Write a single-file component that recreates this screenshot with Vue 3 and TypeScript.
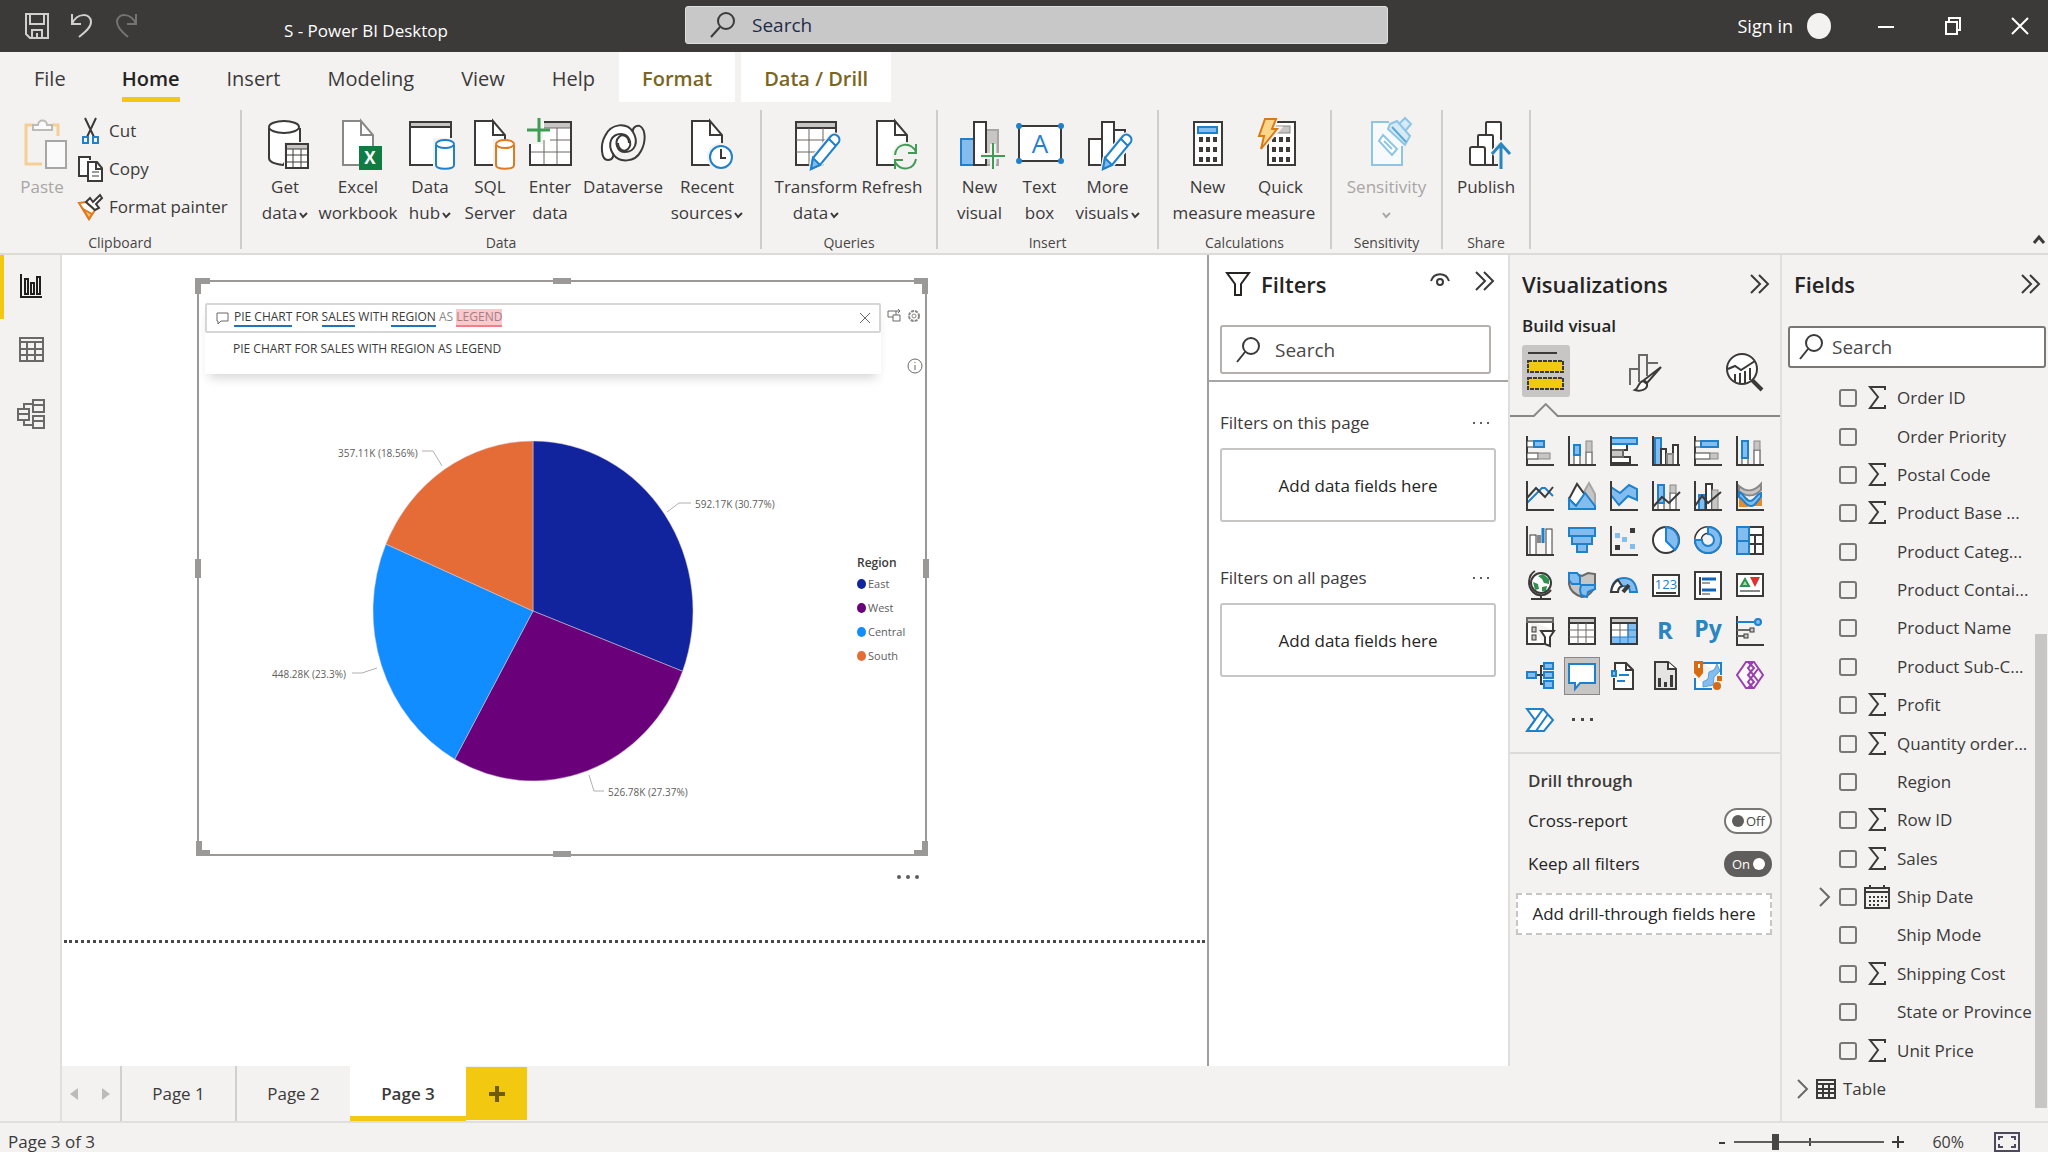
<script setup lang="ts">
import { ref } from 'vue'

const K = '#3b3a39'
const B = '#1f80cc'
const L = '#83bdf0'
const G = '#c8c6c4'

const box = (x: number, y: number, w: number, h: number, fill = '#fff', stroke = K) =>
  `<rect x="${x}" y="${y}" width="${w}" height="${h}" fill="${fill}" stroke="${stroke}"/>`
const line = (d: string, stroke = K, fill = 'none', width = 2) =>
  `<path d="${d}" fill="${fill}" stroke="${stroke}" stroke-width="${width}"/>`
const doc = (stroke = K) =>
  line('M27 3H9V47H39V17L27 3V17H39', stroke, '#fff')
const cylinder = (stroke: string) =>
  line('M30 27V47C30 52 48 52 48 47V27', stroke, '#fff') +
  `<ellipse cx="39" cy="26" rx="9" ry="4" fill="#fff" stroke="${stroke}" stroke-width="2"/>`
const pencil =
  '<path d="M39 18L21 40L19 51L28 47L47 25C49 20 43 14 39 18Z" fill="#fff" stroke="#f3f2f1" stroke-width="5"/>' +
  line('M39 18L21 40L19 51L28 47L47 24C49 19 43 14 39 18ZM37 21L44 28', B, '#fff') +
  line('M21 40L19 51L28 47Z', B, L)
const keypad = [15, 22, 29].map(x => [19, 29, 39].map(y => `<rect x="${x}" y="${y}" width="4" height="5" fill="${K}"/>`).join('')).join('')
const axes = line('M1 0V29H28')

const ribbonIcons: Record<string, string> = {
  paste: line('M12 7H4V46H20M30 7H36V18', '#f5cf96', 'none', 3) +
    line('M11 12V7H16C16 1 25 1 25 7H30V12Z', '#bdbbb9', '#fafafa') + line('M24 23H44V50H24Z', '#a8a6a4', '#fafafa'),
  getdata: line('M8 10V40C8 44 13 46 22 47L39 24V10', K, '#fff') + '<path d="M23 24H41V52H23Z" fill="#f3f2f1"/>' +
    line('M39 10V24') + `<ellipse cx="23" cy="9" rx="15" ry="6" fill="#fff" stroke="${K}" stroke-width="2"/>` +
    box(25, 26, 22, 24) + box(25, 26, 22, 5, G) + line('M25 37H47M25 44H47M32 31V50M40 31V50', K, 'none', 1) + line('M25 26H47V50H25Z'),
  excel: doc('#8a8886') + '<rect x="25" y="28" width="23" height="24" fill="#107c41"/><text x="36" y="46" fill="#fff" font-size="17" font-weight="700" text-anchor="middle">X</text>',
  hub: line('M4 4H45V47H4Z', K, '#fff') + line('M4 4H45V9H4Z', K, G) + '<path d="M27 20H51V52H27Z" fill="#f3f2f1"/>' + cylinder(B),
  sql: doc() + '<path d="M27 21H51V52H27Z" fill="#f3f2f1"/>' + cylinder('#e07a1c'),
  enter: line('M4 20V47H45V4H18', K, '#fff') + '<path d="M18 4H45V10H18Z" fill="#c8c6c4"/>' +
    line('M18 10H45M4 34H45M24 22H45M18 22V47M31 10V47', '#6b6967', 'none', 1) + line('M4 20V47H45V4H18') +
    '<path d="M0 0H17V26H3V16H0Z" fill="#f3f2f1"/>' + line('M13 0V24M1 12H24', '#3f9c55', 'none', 3),
  dataverse: line('M9 42C2 42 1 27 6 18C12 5 28 4 34 14C40 24 36 34 26 34C18 34 15 24 20 19C24 15 30 19 30 25', K, '#fff') +
    line('M41 8C47 12 47 24 42 33C36 45 20 45 14 36C8 26 12 16 22 16C30 16 34 26 29 31C25 35 19 31 19 25') +
    line('M9 42C14 42 15 37 14 35M41 8C36 7 33 11 34 14'),
  recent: doc() + '<circle cx="38" cy="39" r="14" fill="#f3f2f1"/><circle cx="38" cy="39" r="11" fill="#fff" stroke="#1f80cc" stroke-width="2"/>' + line('M38 31V40H43'),
  transform: line('M4 4H44V47H4Z', K, '#fff') + line('M4 4H44V10H4Z', K, G) +
    line('M4 22H44M4 34H44M17 10V47M31 10V47', '#6b6967', 'none', 1) + '<path d="M30 49L46 26V49H30Z" fill="#f3f2f1"/>' + pencil,
  refresh: doc() + '<circle cx="38" cy="38" r="14" fill="#f3f2f1"/>' +
    line('M27 37C28 25 43 23 48 34M48 26V35H40M48 41C46 52 33 54 27 44M27 51V42H35', '#3f9c55'),
  visual: line('M5 21H18V47H5Z', B, L) + line('M30 12H42V47H30Z', '#a8a6a4', G) + line('M18 4H30V47H18Z', K, '#fff') +
    line('M37 26V51M25 38H49', '#f3f2f1', 'none', 6) + line('M37 25V51M25 38H49', '#3f9c55', 'none', 2),
  textbox: line('M3 8H45V43H3Z', K, '#fff') + [[3, 8], [45, 8], [3, 43], [45, 43]].map(p => `<circle cx="${p[0]}" cy="${p[1]}" r="3" fill="${B}"/>`).join('') +
    `<text x="24" y="35" fill="${B}" font-size="26" text-anchor="middle">A</text>`,
  more: line('M5 21H18V47H5ZM30 12H41V47H30Z', K, '#fff') + line('M18 4H30V47H18Z', K, '#fff') + pencil,
  measure: line('M10 4H38V47H10Z', K, '#fff') + line('M14 9H33V15H14Z', B, L) + keypad,
  quick: line('M11 4H38V47H11Z', K, '#fff') + box(16, 8, 17, 7, G, '#8a8886') + keypad +
    line('M8 0H19L15 11H21L4 31L7 18H2Z', '#f3f2f1', '#f3f2f1', 5) + line('M8 1H19L15 11H20L4 31L7 18H2Z', '#d87a18', '#fcd688', 2),
  sensitivity: line('M26 4H9V47H39V28', '#8fc5e4', '#f6fafc') + line('M27 6L34 3L47 18L42 27L25 11ZM37 5L42 0L48 6L43 12', '#8fc5e4', '#d6ebf7') +
    line('M20 17L34 31L29 37L16 23ZM21 23L29 31', '#8fc5e4', '#fff') + line('M29 9L43 24', '#5ba9d6'),
  publish: line('M24 30V5Q24 4 25 4H38Q39 4 39 5V24', K, '#fff') + line('M16 40V18Q16 17 17 17H30Q31 17 31 18V47', K, '#fff') +
    line('M8 31Q8 29 10 29H21Q23 29 23 31V47H10Q8 47 8 45Z', K, '#fff') + line('M22 47H36') +
    line('M39 52V27M30 36L39 26L48 36', '#f3f2f1', 'none', 6) + line('M39 51V27M30 36L39 26L48 36', '#2a86bf', 'none', 3),
}

interface RibbonItem { icon: string; lines: string[]; w: number; menu?: boolean; off?: boolean }
const groups: { name: string; w: number; items: RibbonItem[] }[] = [
  { name: 'Data', w: 520, items: [
    { icon: 'getdata', lines: ['Get', 'data'], w: 72, menu: true },
    { icon: 'excel', lines: ['Excel', 'workbook'], w: 74 },
    { icon: 'hub', lines: ['Data', 'hub'], w: 70, menu: true },
    { icon: 'sql', lines: ['SQL', 'Server'], w: 50 },
    { icon: 'enter', lines: ['Enter', 'data'], w: 70 },
    { icon: 'dataverse', lines: ['Dataverse'], w: 76 },
    { icon: 'recent', lines: ['Recent', 'sources'], w: 92, menu: true },
  ] },
  { name: 'Queries', w: 176, items: [
    { icon: 'transform', lines: ['Transform', 'data'], w: 86, menu: true },
    { icon: 'refresh', lines: ['Refresh'], w: 66 },
  ] },
  { name: 'Insert', w: 221, items: [
    { icon: 'visual', lines: ['New', 'visual'], w: 62 },
    { icon: 'textbox', lines: ['Text', 'box'], w: 58 },
    { icon: 'more', lines: ['More', 'visuals'], w: 78, menu: true },
  ] },
  { name: 'Calculations', w: 173, items: [
    { icon: 'measure', lines: ['New', 'measure'], w: 72 },
    { icon: 'quick', lines: ['Quick', 'measure'], w: 74 },
  ] },
  { name: 'Sensitivity', w: 111, items: [{ icon: 'sensitivity', lines: ['Sensitivity', ''], w: 88, menu: true, off: true }] },
  { name: 'Share', w: 88, items: [{ icon: 'publish', lines: ['Publish'], w: 68 }] },
]

const tabs = ['File', 'Home', 'Insert', 'Modeling', 'View', 'Help']
const contextTabs = ['Format', 'Data / Drill']

const vizIcons: { name: string; art: string }[] = [
  { name: 'Stacked bar chart', art: axes + box(1, 5, 7, 6) + line('M8 5H18V11H8Z', B, L) + box(1, 17, 11, 6) + box(12, 17, 12, 6, G, '#8a8886') },
  { name: 'Stacked column chart', art: box(6, 19, 6, 10) + line('M6 9H12V19H6Z', B, L) + box(18, 16, 6, 13) + box(18, 5, 6, 11, G, '#8a8886') + axes },
  { name: 'Clustered bar chart', art: line('M1 8H17V14H1ZM1 21H20V27H1Z', K, '#fff') + line('M1 14H13V21H1Z', '#6b6967', G) + line('M1 2H27V8H1Z', B, L) + axes },
  { name: 'Clustered column chart', art: line('M3 2H9V29H3Z', B, L) + line('M9 13H14V29H9ZM21 9H26V29H21Z', K, '#fff') + line('M15 18H21V29H15Z', '#8a8886', G) + axes },
  { name: '100% stacked bar chart', art: axes + box(1, 5, 6, 6) + line('M7 5H24V11H7Z', B, L) + box(1, 17, 15, 6) + box(16, 17, 8, 6, G, '#8a8886') },
  { name: '100% stacked column chart', art: box(6, 22, 6, 7) + line('M6 5H12V22H6Z', B, L) + box(18, 14, 6, 15) + box(18, 5, 6, 9, G, '#8a8886') + axes },
  { name: 'Line chart', art: line('M1 22L16 7H19L27 15', B) + line('M1 17L10 7L19 16L27 6') + axes },
  { name: 'Area chart', art: line('M13 16L21 2L27 13V28H20Z', '#a8a6a4', G) + line('M1 18L9 3L17 14L8 25Z', K, '#fff') + line('M1 18L8 25L17 12L27 25V28H1Z', B, L) },
  { name: 'Stacked area chart', art: line('M1 6L10 12L19 4L27 8V19L18 15L9 24L1 14Z', B, L) + axes },
  { name: 'Line and stacked column chart', art: box(6, 22, 6, 7) + line('M6 4H12V22H6Z', B, L) + box(18, 12, 6, 17) + box(18, 4, 6, 8, G, '#8a8886') + line('M1 26L10 16L17 22L28 11') + axes },
  { name: 'Line and clustered column chart', art: line('M5 14H11V29H5Z', B, L) + line('M12 3H18V29H12Z', K, '#fff') + box(18, 9, 6, 20, G, '#8a8886') + line('M1 25L8 15L14 22L27 11') + axes },
  { name: 'Ribbon chart', art: '<path d="M3 17H12V26H3ZM17 17H26V25H17Z" fill="#e8892c"/>' + line('M3 5C10 11 18 11 25 3V9C18 16 10 16 3 10Z', '#8a8886', G) + line('M3 11C9 13 9 20 14 20C19 20 20 13 25 12V16C22 18 20 25 15 25C9 25 8 18 3 16Z', B, L) + axes },
  { name: 'Waterfall chart', art: box(4, 9, 6, 20) + box(20, 3, 6, 26) + line('M13 9V17', '#8a8886', 'none', 4) + line('M17 2V17', B, 'none', 3) + axes },
  { name: 'Funnel', art: line('M1 2H27V10H1Z', B, L) + line('M4 10H24V18H4Z', B, L) + line('M9 18H19V26H9Z', B, L) },
  { name: 'Scatter chart', art: axes + '<path d="M20 2H25V7H20ZM5 19H10V24H5Z" fill="#3b3a39"/><path d="M5 7H10V12H5ZM12 11H17V16H12ZM20 18H25V23H20Z" fill="#83bdf0"/>' },
  { name: 'Pie chart', art: '<circle cx="14" cy="14" r="13" fill="#fff" stroke="#3b3a39" stroke-width="2"/>' + line('M14 1V15L23 24C30 16 27 3 14 1Z', B, L) },
  { name: 'Donut chart', art: '<circle cx="14" cy="14" r="10" fill="none" stroke="#3b3a39" stroke-width="8"/><circle cx="14" cy="14" r="10" fill="none" stroke="#fff" stroke-width="5"/>' + line('M14 1A13 13 0 1 1 1 14H8A6 6 0 1 0 14 8Z', B, L) },
  { name: 'Treemap', art: line('M1 1H27V28H1ZM13 9H27M19 9V28M13 18H27', K, '#fff') + line('M1 1H13V28H1ZM1 15H13', B, L) },
  { name: 'Map', art: '<circle cx="15" cy="12" r="10" fill="#fff" stroke="#3b3a39" stroke-width="2"/>' + '<path d="M12 5L17 3L23 8V13L18 12L16 8ZM7 11L12 13L13 18L9 19ZM16 16L21 15L20 20L16 20Z" fill="#2f9150"/>' + line('M9 0C2 4 1 15 7 21C12 26 20 25 25 19M15 24V28M5 28H25') },
  { name: 'Filled map', art: line('M1 2L8 3L14 5L20 2L27 3V13C27 19 20 26 14 26C8 24 2 20 1 13Z', '#6b6967', G) + line('M1 2H9L12 6V13H4L1 9Z', B, L) + line('M13 14H27V18L20 21L19 26L13 24L12 19Z', B, L) },
  { name: 'Gauge', art: line('M1 21C2 12 6 7 14 7C22 7 26 12 27 21H20C20 17 18 15 14 15C10 15 8 17 8 21Z', B, L) + line('M1 21C2 15 4 11 8 9L12 15C9 16 8 18 8 21Z', K, '#fff') + line('M13 21L19 14', K, 'none', 4) },
  { name: 'Card', art: line('M1 4H27V25H1ZM4 22H24', K, '#fff') + '<text x="14" y="18" font-size="13" text-anchor="middle" fill="#1f80cc">123</text>' },
  { name: 'Multi-row card', art: line('M1 1H27V28H1ZM6 6V24', K, '#fff') + line('M8 8H22M8 19H22', '#0f66b8', 'none', 3) + line('M8 12H16M8 23H16', K, 'none', 1) },
  { name: 'KPI', art: line('M1 3H27V25H1Z', K, '#fff') + line('M4 20H24', '#8a8886') + line('M5 15L9 8L13 15Z', '#2f9150', '#a4dcae') + '<path d="M14 6H24L19 16Z" fill="#e03030"/>' },
  { name: 'Slicer', art: line('M1 3H27V14M18 28H1V3', K, '#fff') + line('M1 2H27V6H1Z', '#6b6967', G) + box(6, 11, 4, 5, G) + box(6, 19, 4, 5, G) + line('M15 15H28L24 21V30L19 28V21Z', K, '#fff') },
  { name: 'Table', art: line('M1 2H27V28H1Z', K, '#fff') + line('M1 2H27V7H1Z', K, G) + line('M1 14H27M1 21H27M10 7V28M18 7V28', '#6b6967', 'none', 1) },
  { name: 'Matrix', art: line('M1 2H27V28H1Z', K, '#fff') + '<path d="M18 7H27V28H1V21H18Z" fill="#83bdf0"/>' + line('M1 14H18M10 7V21M18 7V21', '#6b6967', 'none', 1) + line('M18 14H27M1 21H27M10 21V28M18 7V28', B, 'none', 1) + line('M1 2H27V28H1Z') + line('M1 2H27V7H1Z', K, G) },
  { name: 'R script visual', art: '<text x="13" y="23" font-size="24" font-weight="700" text-anchor="middle" fill="#2a86bf">R</text>' },
  { name: 'Python visual', art: '<text x="14" y="21" font-size="23" font-weight="700" text-anchor="middle" fill="#2a86bf">Py</text>' },
  { name: 'Key influencers', art: axes + line('M1 6H18', B) + line('M1 14H14M1 20H8', '#6b6967') + '<circle cx="22" cy="6" r="3" fill="#83bdf0" stroke="#1f80cc" stroke-width="2"/>' + box(14, 12, 4, 4, G) + box(8, 18, 4, 4, G) },
  { name: 'Decomposition tree', art: line('M10 14H18M19 5H15V23H19') + line('M1 11H10V17H1ZM18 2H27V8H18ZM18 11H27V17H18ZM18 20H27V27H18Z', B, L) },
  { name: 'Q&A', art: line('M1 3H27V22H12L7 28V22H1Z', B, '#fff') },
  { name: 'Smart narrative', art: line('M5 10V2H16L23 9V28H4V17M16 2V9H23', K, '#fff') + line('M2 10H6V15H2Z', B, L) + line('M9 14H19M7 20H15', B) },
  { name: 'Paginated report', art: line('M3 1H16L24 8V28H3Z', K, '#e6e4e2') + line('M16 1V8H24', K, '#fff') + '<path d="M6 17H9V26H6ZM12 21H15V26H12ZM18 14H21V26H18Z" fill="#3b3a39"/>' },
  { name: 'ArcGIS Maps', art: line('M9 2H27V14M18 28H1V17', B, '#fff') + line('M23 3L20 9L15 11L14 18L9 21V26L19 24L20 16L26 10Z', '#5aa0dc', L, 1) + '<path d="M0 0H9V12L5 17L0 12ZM23 15H28V20H23Z" fill="#d86b12"/><circle cx="23" cy="25" r="4" fill="#d86b12"/><path d="M4 3H6V7H4Z" fill="#fff"/>' },
  { name: 'Power Apps', art: line('M10 1H18L27 14L18 27H10L1 14Z', '#9a3fae', '#fdf8fd') + line('M12 1L18 7L12 14L18 21L12 27M17 1L12 7L22 20M17 27L12 21L22 8', '#9a3fae') },
  { name: 'Power Automate', art: line('M1 3H17L27 14L18 25H1L9 14Z', B, '#fff') + line('M17 3L1 25M22 8L10 25M9 14L13 9', B) },
  { name: 'More visuals', art: '<path d="M4 12H7V15H4ZM13 12H16V15H13ZM22 12H25V15H22Z" fill="#4a4948"/>' },
]

const slices = [
  { name: 'East', share: 30.77, color: '#12239e' },
  { name: 'West', share: 27.37, color: '#6b007b' },
  { name: 'Central', share: 23.3, color: '#118dff' },
  { name: 'South', share: 18.56, color: '#e66c37' },
]
const rx = 160
const ry = 170
let turned = 0
const wedges = slices.map(s => {
  const point = (pct: number) => {
    const a = (pct / 100) * Math.PI * 2
    return `${(335 + rx * Math.sin(a)).toFixed(1)} ${(232 - ry * Math.cos(a)).toFixed(1)}`
  }
  const start = point(turned)
  turned += s.share
  return { color: s.color, d: `M335 232L${start}A${rx} ${ry} 0 0 1 ${point(turned)}Z` }
})
const callouts = [
  { text: '592.17K (30.77%)', x: 497, y: 129, d: 'M469 133L481 124H493' },
  { text: '526.78K (27.37%)', x: 410, y: 417, d: 'M391 396L396 412H406' },
  { text: '448.28K (23.3%)', x: 74, y: 299, d: 'M179 289L164 294H154' },
  { text: '357.11K (18.56%)', x: 140, y: 78, d: 'M244 87L235 72H224' },
]

const fields = [
  { name: 'Order ID', kind: 'sum' }, { name: 'Order Priority', kind: '' }, { name: 'Postal Code', kind: 'sum' },
  { name: 'Product Base ...', kind: 'sum' }, { name: 'Product Categ...', kind: '' }, { name: 'Product Contai...', kind: '' },
  { name: 'Product Name', kind: '' }, { name: 'Product Sub-C...', kind: '' }, { name: 'Profit', kind: 'sum' },
  { name: 'Quantity order...', kind: 'sum' }, { name: 'Region', kind: '' }, { name: 'Row ID', kind: 'sum' },
  { name: 'Sales', kind: 'sum' }, { name: 'Ship Date', kind: 'date' }, { name: 'Ship Mode', kind: '' },
  { name: 'Shipping Cost', kind: 'sum' }, { name: 'State or Province', kind: '' }, { name: 'Unit Price', kind: 'sum' },
]

const pages = ['Page 1', 'Page 2', 'Page 3']
const page = ref(2)
const zoom = ref(60)
const crossReport = ref(false)
const keepFilters = ref(true)
</script>

<template>
  <div class="app">
    <header class="titlebar">
      <div class="quick">
        <button aria-label="Save"><svg width="24" height="26" viewBox="0 0 24 26" fill="none" stroke="#d0d0d0" stroke-width="2"><path d="M1 1H23V25H5L1 21ZM5 1V11H19V1M7 25V17H17V25M12 20V25" /></svg></button>
        <button aria-label="Undo"><svg width="24" height="26" viewBox="0 0 24 26" fill="none" stroke="#d0d0d0" stroke-width="2"><path d="M2 1V11H11M2 11C7 -1 21 0 21 9C21 15 14 20 9 24" /></svg></button>
        <button aria-label="Redo"><svg width="24" height="26" viewBox="0 0 24 26" fill="none" stroke="#747474" stroke-width="2"><path d="M21 1V11H12M21 11C16 -1 2 0 2 9C2 15 8 20 13 24" /></svg></button>
      </div>
      <h1>S - Power BI Desktop</h1>
      <label class="topsearch">
        <svg width="26" height="26" viewBox="0 0 26 26" fill="none" stroke="#3b3a39" stroke-width="2"><circle cx="16" cy="9" r="8" /><path d="M10 15L1 25" /></svg>
        <input type="search" placeholder="Search" aria-label="Search">
      </label>
      <div class="account">
        <a href="#">Sign in</a><span class="avatar"></span>
        <button aria-label="Minimize"><svg width="18" height="18" viewBox="0 0 18 18" fill="none" stroke="#fff" stroke-width="2"><path d="M1 10H17" /></svg></button>
        <button aria-label="Restore"><svg width="18" height="18" viewBox="0 0 18 18" fill="none" stroke="#fff" stroke-width="2"><path d="M2 5H13V17H2ZM5 5V1H16V13H13" /></svg></button>
        <button aria-label="Close"><svg width="18" height="18" viewBox="0 0 18 18" fill="none" stroke="#fff" stroke-width="2"><path d="M1 1L17 17M17 1L1 17" /></svg></button>
      </div>
    </header>

    <nav class="tabs">
      <button v-for="t in tabs" :key="t" :class="{ current: t === 'Home', file: t === 'File' }">{{ t }}</button>
      <div class="context"><button v-for="t in contextTabs" :key="t">{{ t }}</button></div>
    </nav>

    <section class="ribbon">
      <div class="group clipboard">
        <div class="items">
          <button class="big off paste" disabled><svg width="48" height="52" viewBox="-4 0 48 52" v-html="ribbonIcons.paste"></svg><span>Paste</span></button>
          <div class="small">
            <button><svg width="26" height="26" viewBox="0 0 26 26" fill="none" stroke="#3b3a39" stroke-width="2"><path d="M7 0L16 19M18 0L9 19" /><path d="M5 19H10V25H5ZM15 19H20V25H15Z" stroke="#1f80cc" /></svg>Cut</button>
            <button><svg width="26" height="26" viewBox="0 0 26 26" fill="#fff" stroke="#3b3a39" stroke-width="2"><path d="M10 20H1V1H12V4" /><path d="M10 6H19L24 12V25H10ZM18 6V13H24" /><path d="M14 16H21M14 20H21" stroke-width="1" /></svg>Copy</button>
            <button><svg width="26" height="26" viewBox="0 0 26 26" fill="#fff" stroke="#3b3a39" stroke-width="2"><path d="M1 9L8 8L17 16L11 25Z" stroke="#e07a1c" /><path d="M5 15L14 20L11 25Z" fill="#f6c184" stroke="#e07a1c" /><path d="M8 8L12 4L15 8L22 1L24 4L18 10L21 14L17 16Z" /></svg>Format painter</button>
          </div>
        </div>
        <p>Clipboard</p>
      </div>
      <div v-for="g in groups" :key="g.name" class="group" :style="{ width: g.w + 'px' }">
        <div class="items">
          <button v-for="i in g.items" :key="i.icon" class="big" :class="{ off: i.off }" :disabled="i.off" :style="{ width: i.w + 'px' }">
            <svg width="48" height="52" viewBox="0 0 48 52" v-html="ribbonIcons[i.icon]"></svg>
            <span>{{ i.lines[0] }}</span>
            <span v-if="i.lines.length > 1">{{ i.lines[1] }}<svg v-if="i.menu" class="caret" width="9" height="8" viewBox="0 0 9 8" fill="none" stroke="currentColor" stroke-width="2"><path d="M1 2L4 6L8 2" /></svg></span>
          </button>
        </div>
        <p>{{ g.name }}</p>
      </div>
      <button class="collapse" aria-label="Collapse ribbon"><svg width="14" height="10" viewBox="0 0 14 10" fill="none" stroke="#3b3a39" stroke-width="3"><path d="M2 8L7 2L12 8" /></svg></button>
    </section>

    <div class="body">
      <aside class="rail">
        <button class="on" aria-label="Report view"><svg width="28" height="30" viewBox="0 0 28 30" fill="none" stroke="#201f1e" stroke-width="2"><path d="M4 3V26H25M8 8H11V23H8ZM14 12H17V23H14ZM20 6H23V23H20Z" /></svg></button>
        <button aria-label="Data view"><svg width="28" height="30" viewBox="0 0 28 30" fill="none" stroke="#6b6967" stroke-width="2"><path d="M3 3H26V26H3ZM3 7H26M3 14H26M3 20H26M10 7V26M18 7V26" /></svg></button>
        <button aria-label="Model view"><svg width="28" height="30" viewBox="0 0 28 30" fill="none" stroke="#6b6967" stroke-width="2"><path d="M1 10H12V21H1ZM1 15H12M16 1H27V13H16ZM16 6H27M16 17H27V29H16ZM16 22H27M7 10V5H16M7 21V26H16" /></svg></button>
      </aside>

      <div class="center">
        <div class="work">
          <main class="canvas">
            <article class="visual">
              <svg class="frame" width="736" height="582" viewBox="0 0 736 582" fill="none" stroke="#9b9998">
                <path d="M4 5H732V579H4Z" stroke-width="2" />
                <path d="M4 18V5H16M720 5H731V18M731 565V577H720M16 577H5V565M359 5H377M359 578H377M4 283V302M732 283V302" stroke-width="6" />
              </svg>
              <div class="qna">
                <div class="ask">
                  <div class="field">
                    <svg width="13" height="14" viewBox="0 0 13 14" fill="none" stroke="#6b6967"><path d="M1 2H12V10H5L2 13V10H1Z" /></svg>
                    <div class="query" role="textbox" contenteditable="true" aria-label="Ask a question"><u>PIE CHART</u> FOR <u>SALES</u> WITH <u>REGION</u> <i>AS</i> <mark>LEGEND</mark></div>
                    <button aria-label="Clear"><svg width="12" height="12" viewBox="0 0 12 12" stroke="#6b6967"><path d="M1 1L11 11M11 1L1 11" /></svg></button>
                  </div>
                  <button class="suggestion">PIE CHART FOR SALES WITH REGION AS LEGEND</button>
                </div>
                <div class="tools">
                  <button aria-label="Convert to standard visual"><svg width="14" height="14" viewBox="0 0 14 14" fill="none" stroke="#6b6967"><path d="M6 8H1V2H9M6 6H13V12H6ZM9 6V2H12M11 0L13 2L11 4" /></svg></button>
                  <button aria-label="Settings"><svg width="14" height="14" viewBox="0 0 14 14" fill="none" stroke="#8a8886"><circle cx="7" cy="7" r="5" stroke-width="2" stroke-dasharray="3 1" /><circle cx="7" cy="7" r="2" /></svg></button>
                  <button class="info" aria-label="Information"><svg width="16" height="16" viewBox="0 0 16 16" fill="none" stroke="#6b6967"><circle cx="8" cy="8" r="7" /><path d="M8 7V12M8 4V5" /></svg></button>
                </div>
              </div>
              <div class="chart">
                <svg class="pie" width="640" height="450" viewBox="0 0 640 450" role="img" aria-label="Sales by region">
                  <path v-for="w in wedges" :key="w.d" :d="w.d" :fill="w.color" stroke="#d8d0dc" stroke-width="0.5" />
                  <g v-for="c in callouts" :key="c.text">
                    <path :d="c.d" fill="none" stroke="#b3b0ad" />
                    <text :x="c.x" :y="c.y" font-size="10" fill="#605e5c">{{ c.text }}</text>
                  </g>
                </svg>
                <div class="legend">
                  <strong>Region</strong>
                  <ul><li v-for="s in slices" :key="s.name"><span :style="{ background: s.color }"></span>{{ s.name }}</li></ul>
                </div>
              </div>
              <button class="options" aria-label="More options"><svg width="24" height="6" viewBox="0 0 24 6" fill="#605e5c"><circle cx="3" cy="3" r="2" /><circle cx="12" cy="3" r="2" /><circle cx="21" cy="3" r="2" /></svg></button>
            </article>
            <hr>
          </main>

          <aside class="filters">
            <div class="head">
              <svg width="26" height="26" viewBox="0 0 26 26" fill="none" stroke="#252423" stroke-width="2"><path d="M2 2H24L16 13V24H10V13Z" /></svg>
              <h2>Filters</h2>
              <button aria-label="Show filters"><svg width="20" height="16" viewBox="0 0 20 16" fill="none" stroke="#3b3a39" stroke-width="2"><path d="M1 8C4 -1 16 -1 19 8" /><circle cx="10" cy="9" r="3" /></svg></button>
              <button aria-label="Collapse filters"><svg width="20" height="20" viewBox="0 0 20 20" fill="none" stroke="#3b3a39" stroke-width="2"><path d="M1 1L10 10L1 19M9 1L18 10L9 19" /></svg></button>
            </div>
            <label class="search">
              <svg width="24" height="26" viewBox="0 0 24 26" fill="none" stroke="#3b3a39" stroke-width="2"><circle cx="15" cy="9" r="8" /><path d="M9 15L1 25" /></svg>
              <input type="search" placeholder="Search" aria-label="Search filters">
            </label>
            <section v-for="f in ['Filters on this page', 'Filters on all pages']" :key="f">
              <h3>{{ f }}<button aria-label="More options"><svg width="18" height="4" viewBox="0 0 18 4" fill="#605e5c"><path d="M0 1H2V3H0ZM7 1H9V3H7ZM14 1H16V3H14Z" /></svg></button></h3>
              <div class="drop">Add data fields here</div>
            </section>
          </aside>
        </div>

        <footer class="pages">
          <button class="arrow" aria-label="Previous page"><svg width="8" height="12" viewBox="0 0 8 12" fill="#bdbbb9"><path d="M8 0V12L0 6Z" /></svg></button>
          <button class="arrow" aria-label="Next page"><svg width="8" height="12" viewBox="0 0 8 12" fill="#bdbbb9"><path d="M0 0V12L8 6Z" /></svg></button>
          <button v-for="(p, n) in pages" :key="p" class="page" :class="{ on: n === page }" @click="page = n">{{ p }}</button>
          <button class="add" aria-label="New page"><svg width="18" height="18" viewBox="0 0 18 18" stroke="#6e5c08" stroke-width="4"><path d="M9 1V17M1 9H17" /></svg></button>
        </footer>
      </div>

      <aside class="viz">
        <div class="head">
          <h2>Visualizations</h2>
          <button aria-label="Collapse visualizations"><svg width="20" height="20" viewBox="0 0 20 20" fill="none" stroke="#3b3a39" stroke-width="2"><path d="M1 1L10 10L1 19M9 1L18 10L9 19" /></svg></button>
        </div>
        <h3>Build visual</h3>
        <div class="modes">
          <button class="on" aria-label="Build visual"><svg width="38" height="40" viewBox="0 0 38 40"><path d="M1 2H30" stroke="#3b3a39" stroke-width="2" /><path d="M1 10H36V21H1ZM1 27H36V38H1Z" fill="#f2c811" stroke="#3b3a39" stroke-width="2" stroke-dasharray="4 1" /></svg></button>
          <button aria-label="Format visual"><svg width="38" height="40" viewBox="0 0 38 40" fill="none" stroke="#6b6967" stroke-width="2"><path d="M3 34V18H12V31M12 18V4H20V25M20 12H31" /><path d="M34 16L20 32L17 29Z" fill="#fff" stroke="#3b3a39" /><path d="M8 39C12 37 11 31 16 30L20 33C21 38 14 41 8 39Z" fill="#fff" stroke="#3b3a39" /></svg></button>
          <button aria-label="Add further analyses"><svg width="38" height="40" viewBox="0 0 38 40" fill="none" stroke="#3b3a39" stroke-width="2"><circle cx="16" cy="18" r="15" fill="#fff" /><path d="M2 18L9 15L15 19L29 10M9 23V31M14 22V33M19 20V32M24 17V29" /><path d="M26 29L36 39" stroke-width="4" /></svg></button>
        </div>
        <svg class="notch" height="14" width="272" viewBox="0 0 272 14" fill="none" stroke="#8a8886" stroke-width="2"><path d="M0 13H24L36 1L48 13H272" /></svg>
        <div class="gallery">
          <button v-for="v in vizIcons" :key="v.name" :class="{ on: v.name === 'Q&A' }" :aria-label="v.name"><svg width="28" height="30" viewBox="0 0 28 30" v-html="v.art"></svg></button>
        </div>
        <div class="drill">
          <h3>Drill through</h3>
          <label class="row">Cross-report<span class="switch"><input v-model="crossReport" type="checkbox"><span>{{ crossReport ? 'On' : 'Off' }}</span></span></label>
          <label class="row">Keep all filters<span class="switch"><input v-model="keepFilters" type="checkbox"><span>{{ keepFilters ? 'On' : 'Off' }}</span></span></label>
          <div class="well">Add drill-through fields here</div>
        </div>
      </aside>

      <aside class="fields">
        <div class="head">
          <h2>Fields</h2>
          <button aria-label="Collapse fields"><svg width="20" height="20" viewBox="0 0 20 20" fill="none" stroke="#3b3a39" stroke-width="2"><path d="M1 1L10 10L1 19M9 1L18 10L9 19" /></svg></button>
        </div>
        <label class="search">
          <svg width="24" height="26" viewBox="0 0 24 26" fill="none" stroke="#3b3a39" stroke-width="2"><circle cx="15" cy="9" r="8" /><path d="M9 15L1 25" /></svg>
          <input type="search" placeholder="Search" aria-label="Search fields">
        </label>
        <div class="listing">
          <ul>
            <li v-for="f in fields" :key="f.name">
              <svg class="twist" width="12" height="20" viewBox="0 0 12 20" fill="none" stroke="#6b6967" stroke-width="2"><path v-if="f.kind === 'date'" d="M1 1L10 10L1 19" /></svg>
              <label>
                <input type="checkbox">
                <svg width="26" height="26" viewBox="0 0 26 26" fill="none" stroke="#3b3a39" stroke-width="2">
                  <path v-if="f.kind === 'sum'" d="M21 5V2H6L14 12L6 23H21V20" />
                  <path v-if="f.kind === 'date'" d="M1 4H25V24H1ZM1 8H25M6 1V5M20 1V5" />
                  <path v-if="f.kind === 'date'" d="M5 13H23M5 17H23M5 21H17" stroke-dasharray="2 2" />
                </svg>
                {{ f.name }}
              </label>
            </li>
            <li class="table">
              <svg class="twist" width="12" height="20" viewBox="0 0 12 20" fill="none" stroke="#6b6967" stroke-width="2"><path d="M1 1L10 10L1 19" /></svg>
              <svg width="20" height="20" viewBox="0 0 20 20" fill="none" stroke="#3b3a39" stroke-width="2"><path d="M1 1H19V19H1ZM1 5H19M1 10H19M1 14H19M7 5V19M13 5V19" /></svg>
              Table
            </li>
          </ul>
          <div class="scroll"><span></span></div>
        </div>
      </aside>
    </div>

    <footer class="status">
      <span>Page {{ page + 1 }} of {{ pages.length }}</span>
      <div class="zoom">
        <button aria-label="Zoom out"><svg width="8" height="16" viewBox="0 0 8 16" stroke="#3b3a39" stroke-width="2"><path d="M1 9H7" /></svg></button>
        <span class="track"><input v-model.number="zoom" type="range" min="10" max="200" aria-label="Zoom level"></span>
        <button aria-label="Zoom in"><svg width="12" height="16" viewBox="0 0 12 16" stroke="#3b3a39" stroke-width="2"><path d="M0 8H12M6 2V14" /></svg></button>
        <output>{{ zoom }}%</output>
        <button aria-label="Fit to page"><svg width="26" height="20" viewBox="0 0 26 20" fill="none" stroke="#4c4a5c" stroke-width="2"><path d="M1 1H25V19H1ZM5 8V5H9M17 5H21V8M21 12V15H17M9 15H5V12" /></svg></button>
      </div>
    </footer>
  </div>
</template>

<style>
body { margin: 0; background: #fff; }
</style>

<style scoped>
.app { display: flex; flex-direction: column; height: 100vh; overflow: hidden; font: 17px/26px "Segoe UI", "Open Sans", "Noto Sans", sans-serif; color: #3b3a39; background: #f3f2f1; }
.app * { box-sizing: border-box; }
button { font: inherit; color: inherit; background: none; border: 0; padding: 0; margin: 0; }
svg { display: block; flex: none; overflow: visible; }
h1, h2, h3, p, ul { margin: 0; padding: 0; font-weight: 400; list-style: none; }
input[type="search"] { flex: 1; min-width: 0; border: 0; padding: 0; background: none; outline: 0; font: inherit; font-size: 19px; color: #252423; }
input[type="search"]::placeholder { color: #4a4948; opacity: 1; }

.titlebar { flex: none; display: flex; align-items: center; height: 52px; background: #3b3a39; color: #fff; }
.quick { display: flex; gap: 21px; width: 284px; padding-left: 25px; }
.titlebar h1 { flex: none; width: 401px; padding-top: 10px; font-size: 17px; }
.topsearch { display: flex; align-items: center; gap: 16px; width: 703px; height: 38px; margin-bottom: 2px; padding: 0 24px; border: 1px solid #dedede; border-radius: 3px; background: #c8c8c8; }
.topsearch input::placeholder { color: #1f2c4c; }
.account { display: flex; align-items: center; margin-left: auto; padding-right: 19px; }
.account a { color: #fff; text-decoration: none; font-size: 18px; }
.avatar { width: 24px; height: 26px; margin: 0 46px 0 14px; border-radius: 50%; background: #f3f2f1; }
.account button + button { margin-left: 49px; }

.tabs { flex: none; display: flex; height: 50px; padding-left: 34px; gap: 47px; font-size: 20px; color: #3b3a39; }
.tabs button { height: 50px; padding-top: 4px; white-space: nowrap; }
.tabs .file { padding-right: 9px; }
.tabs .current { font-weight: 600; color: #252423; box-shadow: inset 0 -5px #f2c811; }
.context { display: flex; gap: 6px; margin-left: -23px; }
.context button { padding: 4px 23px 0; background: #fff; color: #7a661e; font-weight: 600; }

.ribbon { flex: none; position: relative; display: flex; height: 153px; padding: 8px 0 4px; border-bottom: 2px solid #dddbd9; }
.group { display: flex; flex-direction: column; justify-content: space-between; border-right: 2px solid #cfcdcb; }
.group > p { font-size: 14px; line-height: 12px; text-align: center; color: #484644; }
.items { display: flex; justify-content: center; padding-top: 8px; }
.big { flex: none; display: flex; flex-direction: column; align-items: center; justify-content: flex-start; white-space: nowrap; }
.big svg { margin-bottom: 4px; }
.big span { display: flex; align-items: center; gap: 2px; height: 26px; font-size: 17px; line-height: 26px; }
.big .caret { margin: 4px 0 0; }
.off { color: #a8a6a4; }
.clipboard { width: 242px; }
.clipboard .items { justify-content: flex-start; padding-left: 8px; }
.paste { width: 68px; }
.small { display: flex; flex-direction: column; margin-top: -6px; }
.small button { display: flex; align-items: center; gap: 5px; height: 38px; margin-left: 2px; white-space: nowrap; }
.collapse { position: absolute; right: 2px; bottom: 8px; }

.body { flex: 1; display: flex; min-height: 0; }
.rail { flex: none; width: 62px; border-right: 2px solid #e1dfdd; }
.rail button { display: flex; align-items: center; justify-content: center; width: 60px; height: 64px; padding: 0 2px 2px 0; border-left: 4px solid transparent; }
.rail .on { border-color: #f2c811; }
.center { flex: 1; min-width: 0; display: flex; flex-direction: column; }
.work { flex: 1; display: flex; min-height: 0; background: #fff; }
.canvas { flex: 1; position: relative; min-width: 0; padding: 21px 0 0 132px; }
.canvas hr { margin: 57px 2px 0 -130px; border: 0; border-top: 3px dotted #4a4948; }
.visual { position: relative; width: 736px; height: 607px; }
.frame { position: absolute; inset: 0 auto auto 0; }
.qna { position: relative; z-index: 1; display: flex; gap: 6px; padding: 27px 5px 0 11px; font-size: 12px; line-height: 16px; }
.ask { width: 676px; box-shadow: 0 8px 10px -4px rgba(0, 0, 0, .16); background: #fff; }
.field { display: flex; align-items: center; height: 30px; padding: 0 8px 0 9px; border: 2px solid #d8d6d4; border-radius: 2px; background: #fff; }
.query { flex: 1; padding-left: 5px; outline: 0; white-space: nowrap; }
.query u { display: inline-block; text-decoration: none; border-bottom: 2px solid #1f73b8; }
.query i { font-style: normal; color: #8a8886; }
.query mark { display: inline-block; border-bottom: 2px solid #f08088; background: #fbc8cc; color: #a08084; }
.suggestion { display: block; width: 100%; height: 32px; padding-left: 28px; text-align: left; white-space: nowrap; }
.tools { display: flex; flex-wrap: wrap; align-content: flex-start; gap: 35px 6px; padding-top: 6px; width: 36px; }
.tools .info { margin-left: 20px; }
.chart { display: flex; margin-top: 5px; }
.pie { margin-left: 4px; font-family: inherit; }
.legend { margin: 175px 0 0 19px; font-size: 11px; line-height: 18px; color: #605e5c; }
.legend strong { display: block; color: #3b3a39; font-size: 12px; font-weight: 600; }
.legend li { display: flex; align-items: center; gap: 2px; height: 24px; }
.legend li span { width: 9px; height: 10px; border-radius: 50%; }
.options { position: absolute; right: 10px; bottom: 3px; }

.filters { flex: none; width: 303px; border-left: 2px solid #a19f9d; border-right: 2px solid #e1dfdd; }
.head { display: flex; align-items: center; height: 58px; }
.head h2 { font-size: 22px; font-weight: 600; line-height: 30px; color: #252423; }
.filters .head { padding: 0 13px 0 16px; }
.filters h2 { flex: 1; padding-left: 10px; }
.filters .head button { margin: 0 0 6px 25px; }
.search { display: flex; align-items: center; border: 2px solid #b3b0ad; border-radius: 3px; background: #fff; }
.filters .search { gap: 15px; width: 271px; height: 49px; margin: 12px 0 0 11px; padding: 0 14px; }
.filters .search + section { margin-top: 6px; border-top: 2px solid #a8a6a4; padding-top: 28px; }
.filters section { padding-top: 43px; }
.filters h3 { display: flex; justify-content: space-between; align-items: center; padding: 0 17px 0 11px; height: 26px; color: #3b3a39; font-size: 17px; }
.drop { height: 74px; margin: 12px 12px 0 11px; border: 2px solid #c8c6c4; border-radius: 3px; line-height: 72px; text-align: center; color: #252423; }

.pages { flex: none; display: flex; align-items: center; height: 55px; padding-left: 6px; font-size: 17px; }
.arrow { display: flex; justify-content: center; width: 12px; margin-right: 20px; }
.arrow + .arrow { margin-right: 8px; }
.page { width: 115px; height: 55px; border-left: 2px solid #d2d0ce; }
.page.on { width: 116px; background: #fff; border-left: 0; font-weight: 600; box-shadow: inset 0 -5px #f2c811; }
.add { display: flex; align-items: center; justify-content: center; width: 61px; height: 53px; background: #f2c811; }

.viz { flex: none; width: 272px; border-right: 2px solid #e1dfdd; }
.viz .head, .fields .head { justify-content: space-between; }
.viz .head { padding: 0 10px 0 12px; }
.viz h3 { height: 26px; padding-left: 12px; line-height: 26px; color: #252423; font-size: 17px; font-weight: 600; }
.modes { display: flex; justify-content: space-between; padding: 6px 11px 0 12px; }
.modes button { display: flex; align-items: center; justify-content: center; width: 48px; height: 52px; border-radius: 3px; }
.modes .on { background: #c8c6c4; }
.notch { margin-top: 6px; width: 100%; }
.gallery { display: grid; grid-template-columns: repeat(6, 42px); grid-auto-rows: 45px; padding: 11px 0 9px 9px; border-bottom: 2px solid #dddbd9; }
.gallery button { display: flex; align-items: center; justify-content: center; width: 36px; height: 38px; margin: auto; }
.gallery .on { border: 1px solid #8a8886; background: #c8c6c4; }
.drill { padding: 14px 8px 0 6px; }
.drill h3 { padding-left: 12px; color: #3b3a39; }
.row { display: flex; align-items: center; justify-content: space-between; height: 43px; padding-left: 12px; color: #252423; }
.drill h3 + .row { margin-top: 5px; }
.switch { position: relative; display: block; width: 48px; height: 26px; font-size: 13px; line-height: 26px; }
.switch input { position: absolute; inset: 0; margin: 0; width: 48px; height: 26px; appearance: none; border: 2px solid #797775; border-radius: 13px; background: #fff; }
.switch input::after { content: ""; position: absolute; top: 5px; left: 6px; width: 12px; height: 12px; border-radius: 50%; background: #605e5c; }
.switch input:checked { background: #605e5c; border-color: #605e5c; }
.switch input:checked::after { left: 27px; background: #fff; }
.switch span { position: relative; display: block; padding-left: 22px; color: #484644; }
.switch input:checked + span { padding-left: 8px; color: #fff; }
.well { height: 42px; margin-top: 8px; border: 2px dashed #c8c6c4; background: #fff; line-height: 38px; text-align: center; white-space: nowrap; color: #252423; font-size: 17px; }

.fields { flex: none; width: 266px; display: flex; flex-direction: column; }
.fields .head { flex: none; padding: 0 7px 0 12px; }
.fields .search { flex: none; gap: 9px; height: 42px; margin: 13px 2px 11px 6px; padding: 0 9px; border-color: #797775; }
.listing { flex: 1; display: flex; justify-content: space-between; min-height: 0; padding-bottom: 13px; }
.listing ul { display: flex; flex-direction: column; padding-left: 37px; }
.listing li { flex: 1; display: flex; align-items: center; white-space: nowrap; }
.listing label { display: flex; align-items: center; gap: 7px; padding-left: 8px; }
.listing input { flex: none; appearance: none; width: 18px; height: 18px; margin: 0; border: 2px solid #797775; border-radius: 3px; }
.listing .table { gap: 7px; margin-left: -22px; }
.scroll { display: flex; align-items: flex-end; width: 12px; margin-right: 1px; }
.scroll span { width: 12px; height: 65%; background: #c8c6c4; }

.status { flex: none; display: flex; align-items: center; justify-content: space-between; height: 31px; padding: 8px 28px 0 8px; border-top: 2px solid #e1dfdd; font-size: 17px; line-height: 20px; }
.zoom { display: flex; align-items: center; gap: 8px; }
.zoom output { margin: 0 22px 0 20px; font-size: 16px; }
.track { position: relative; display: flex; }
.track::before { content: ""; position: absolute; left: 75px; top: 4px; width: 2px; height: 8px; background: #484644; }
.track input { appearance: none; position: relative; width: 150px; height: 16px; margin: 0; background: linear-gradient(#605e5c, #605e5c) center / 100% 2px no-repeat; }
.track input::-webkit-slider-thumb { appearance: none; width: 7px; height: 16px; background: #484644; }
</style>
